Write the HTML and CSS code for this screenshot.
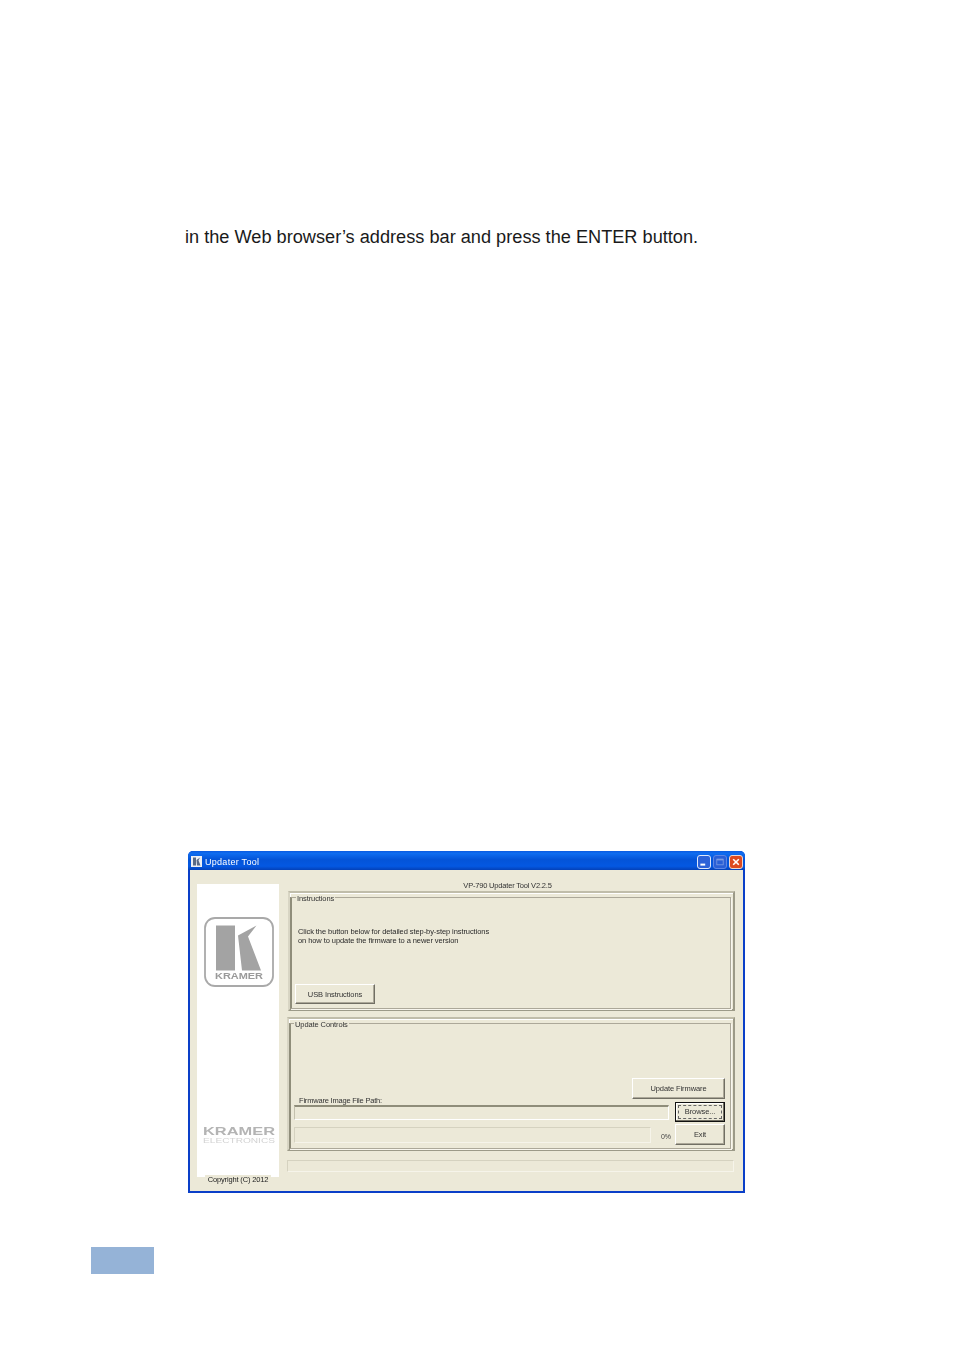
FILE: index.html
```html
<!DOCTYPE html>
<html lang="en">
<head>
<meta charset="utf-8">
<title>Updater Tool</title>
<link rel="stylesheet" href="styles.css">
</head>
<body>
<main class="page">
  <p class="body-text">in the Web browser’s address bar and press the ENTER button.</p>
  <section class="window">
    <header class="titlebar">
      <svg class="app-icon" viewBox="0 0 11 11"><rect width="11" height="11" fill="#eef0f4"/><rect x="2" y="1.5" width="3" height="8" fill="#5a6a86"/><path d="M5.5 4 9 1.5 7.5 4.5 9.500 9.500H6z" fill="#5a6a86"/></svg>
      <span class="title">Updater Tool</span>
      <div class="controls">
        <span class="ctl ctl-min"><svg viewBox="0 0 15 14"><rect x="3" y="9" width="6" height="2.500" fill="#fff"/></svg></span>
        <span class="ctl ctl-max"><svg viewBox="0 0 15 14"><rect x="3.500" y="3.500" width="8" height="7" fill="none" stroke="#7d9be0" stroke-width="1"/><rect x="3.500" y="3" width="8" height="2" fill="#7d9be0"/></svg></span>
        <span class="ctl ctl-close"><svg viewBox="0 0 15 14"><path d="M4 3.500l7 7M11 3.500l-7 7" stroke="#fff" stroke-width="2" fill="none"/></svg></span>
      </div>
    </header>
    <div class="client">
      <aside class="side">
        <div class="side-panel">
          <svg class="logo" viewBox="0 0 70 70">
            <rect x="1" y="1" width="68" height="68" rx="10" fill="#fff" stroke="#a9a9a9" stroke-width="1.800"/>
            <rect x="12" y="8.500" width="19" height="45" fill="#a3a3a3"/>
            <path d="M34 18.500 52.500 8.500 44 19.500 57 53.500H38z" fill="#a3a3a3"/>
            <text class="logo-word" x="11" y="62" textLength="48" lengthAdjust="spacingAndGlyphs">KRAMER</text>
          </svg>
          <svg class="wordmark" viewBox="0 0 74 18">
            <text class="wm-main" x="1" y="9" textLength="72" lengthAdjust="spacingAndGlyphs">KRAMER</text>
            <text class="wm-sub" x="1" y="17" textLength="72" lengthAdjust="spacingAndGlyphs">ELECTRONICS</text>
          </svg>
        </div>
        <span class="copyright">Copyright (C) 2012</span>
      </aside>
      <div class="main">
        <div class="heading">VP-790 Updater Tool V2.2.5</div>
        <div class="group group-a">
          <fieldset class="inner inner-a">
            <legend>Instructions</legend>
            <p class="note">Click the button below for detailed step-by-step instructions<br>on how to update the firmware to a newer version</p>
            <button class="btn btn-usb" type="button">USB Instructions</button>
          </fieldset>
        </div>
        <div class="group group-b">
          <fieldset class="inner inner-b">
            <legend>Update Controls</legend>
            <div class="row-update"><button class="btn btn-update" type="button">Update Firmware</button></div>
            <div class="row-path">
              <div class="path-col">
                <label class="path-label">Firmware Image File Path:</label>
                <div class="sunken path-field"></div>
              </div>
              <button class="btn btn-browse" type="button"><span>Browse...</span></button>
            </div>
            <div class="row-progress">
              <div class="sunken flat progress"></div>
              <span class="pct">0%</span>
              <button class="btn btn-exit" type="button">Exit</button>
            </div>
          </fieldset>
        </div>
        <div class="sunken flat status"></div>
      </div>
    </div>
  </section>
  <div class="page-tab"></div>
</main>
</body>
</html>
```
FILE: styles.css
```css
html, body { margin: 0; padding: 0; background: #fff; }
.page { width: 954px; height: 1354px; overflow: hidden; box-sizing: border-box; padding-top: 227px; font-family: "Liberation Sans", Arial, sans-serif; }
.body-text { margin: 0 0 0 185px; font-size: 18.18px; line-height: 20px; color: #1a1a1a; white-space: nowrap; }

.window { width: 557px; height: 342px; margin: 604px 0 0 188px; box-sizing: border-box; display: flex; flex-direction: column; background: #0a3fc8; border-radius: 5px 5px 0 0; }
.titlebar { height: 19px; flex: none; box-sizing: border-box; display: flex; align-items: center; padding: 2px 2px 0 3px; background: linear-gradient(#0a5ae0 0, #0f6df0 12%, #0454d8 45%, #0458e2 80%, #0441b8 100%); border-radius: 5px 5px 0 0; }
.app-icon { width: 11px; height: 11px; flex: none; }
.title { margin: 1px 0 0 3px; color: #fff; font-size: 9px; letter-spacing: 0.28px; line-height: 17px; filter: blur(0.3px); }
.controls { margin-left: auto; display: flex; gap: 2px; }
.ctl { width: 14px; height: 14px; box-sizing: border-box; border: 1px solid #dfe8fb; border-radius: 3px; display: block; background: #2c62d8; }
.ctl svg { display: block; width: 100%; height: 100%; }
.ctl-max { border-color: #5e86e4; background: #2a5fd6; }
.ctl-close { border-color: #f0d6cc; background: #dd4a20; }

.client { flex: 1; margin: 0 2px 2px 2px; background: #ece9d8; display: flex; padding: 13px 8px 0 7px; min-height: 0; }
.side { width: 82px; flex: none; margin-top: 1px; display: flex; flex-direction: column; align-items: center; }
.side-panel { width: 82px; height: 293px; background: #fff; box-sizing: border-box; padding: 33px 0 0 7px; }
.logo { display: block; width: 70px; height: 70px; filter: blur(0.2px); }
.logo-word { font: bold 8.500px "Liberation Sans", Arial, sans-serif; fill: #9a9a9a; }
.wordmark { display: block; width: 74px; height: 18px; margin: 139px 0 0 -2px; filter: blur(0.2px); }
.wm-main { font: bold 11px "Liberation Sans", Arial, sans-serif; fill: #b4b4b4; }
.wm-sub { font: 6.500px "Liberation Sans", Arial, sans-serif; fill: #d2d2d2; }
.copyright { margin-top: -2px; padding: 0 3px; background: #ece9d8; font-size: 7.500px; line-height: 10px; color: #222; filter: blur(0.25px); letter-spacing: -0.15px; white-space: nowrap; }

.main { width: 448px; flex: none; margin-left: 8px; font-size: 8px; color: #333; }
.heading { height: 8px; line-height: 5px; text-align: center; padding-right: 7px; color: #333; font-size: 7.500px; filter: blur(0.25px); letter-spacing: -0.19px; }
.group { box-sizing: border-box; margin-left: 1px; width: 447px; border: 2px solid #9c9a88; border-top-color: #c0bdaa; border-left-color: #d8d5c4; box-shadow: inset 1px 1px 0 #fff; }
.group-a { height: 120px; }
.group-b { height: 134px; margin-left: 0; width: 448px; margin-top: 6px; }
.inner { margin: -2px 0 0 0; padding: 0; min-width: 0; box-sizing: border-box; border: 1px solid #aca899; border-left: 2px solid #8f8d7a; box-shadow: 1px 1px 0 #f8f6ee; filter: blur(0.25px); }
.inner-a { height: 118px; width: 441px; }
.inner-b { height: 132px; width: 442px; }
legend { margin-left: 3px; padding: 4px 1px 0; font-size: 7.500px; line-height: 8px; letter-spacing: -0.1px; color: #333; }
.inner-a legend { margin-left: 4px; }
.note { margin: 24px 0 0 6px; font-size: 7.500px; line-height: 9px; letter-spacing: -0.08px; color: #2a2a2a; }
.btn { display: block; box-sizing: border-box; margin: 0; padding: 0; font: 7.500px "Liberation Sans", Arial, sans-serif; letter-spacing: -0.1px; color: #333; background: #ece9d8; border: 1px solid; border-color: #fff #716f64 #716f64 #fff; box-shadow: inset -1px -1px 0 #aca899; }
.btn-usb { width: 80px; height: 20px; margin: 39px 0 0 3px; }
.row-update { display: flex; justify-content: flex-end; padding: 49px 5px 0 0; }
.btn-update { width: 93px; height: 21px; }
.row-path { display: flex; justify-content: space-between; align-items: flex-end; margin-top: -1px; padding: 0 5px 0 3px; }
.path-col { width: 375px; }
.path-label { display: block; margin-left: 5px; font-size: 7.500px; line-height: 5px; color: #333; letter-spacing: -0.2px; }
.path-field { height: 15px; margin-top: 2px; margin-bottom: 2px; }
.btn-browse { width: 50px; height: 20px; border: 1px solid #111; box-shadow: inset -1px -1px 0 #716f64, inset 1px 1px 0 #fff; padding: 2px; }
.btn-browse span { display: block; height: 100%; box-sizing: border-box; border: 1px dashed #666; line-height: 12px; }
.row-progress { display: flex; align-items: flex-start; padding: 2px 5px 0 3px; }
.sunken { box-sizing: border-box; border: 1px solid #fff; border-top-color: #8f8d7a; border-left-color: #c4c1ae; background: #ece9d8; border-top-width: 2px; }
.flat { border: 1px solid #d5d2c0; border-right-color: #f6f4ea; border-bottom-color: #f6f4ea; }
.progress { width: 357px; height: 16px; margin-top: 3px; }
.pct { width: 24px; box-sizing: border-box; padding-right: 4px; text-align: right; font-size: 7px; line-height: 8px; margin-top: 9px; color: #444; }
.btn-exit { width: 50px; height: 21px; margin-left: 0; }
.status { width: 447px; height: 12px; margin-top: 9px; }

.page-tab { width: 63px; height: 27px; margin: 54px 0 0 91px; background: #95b3d7; }
```
